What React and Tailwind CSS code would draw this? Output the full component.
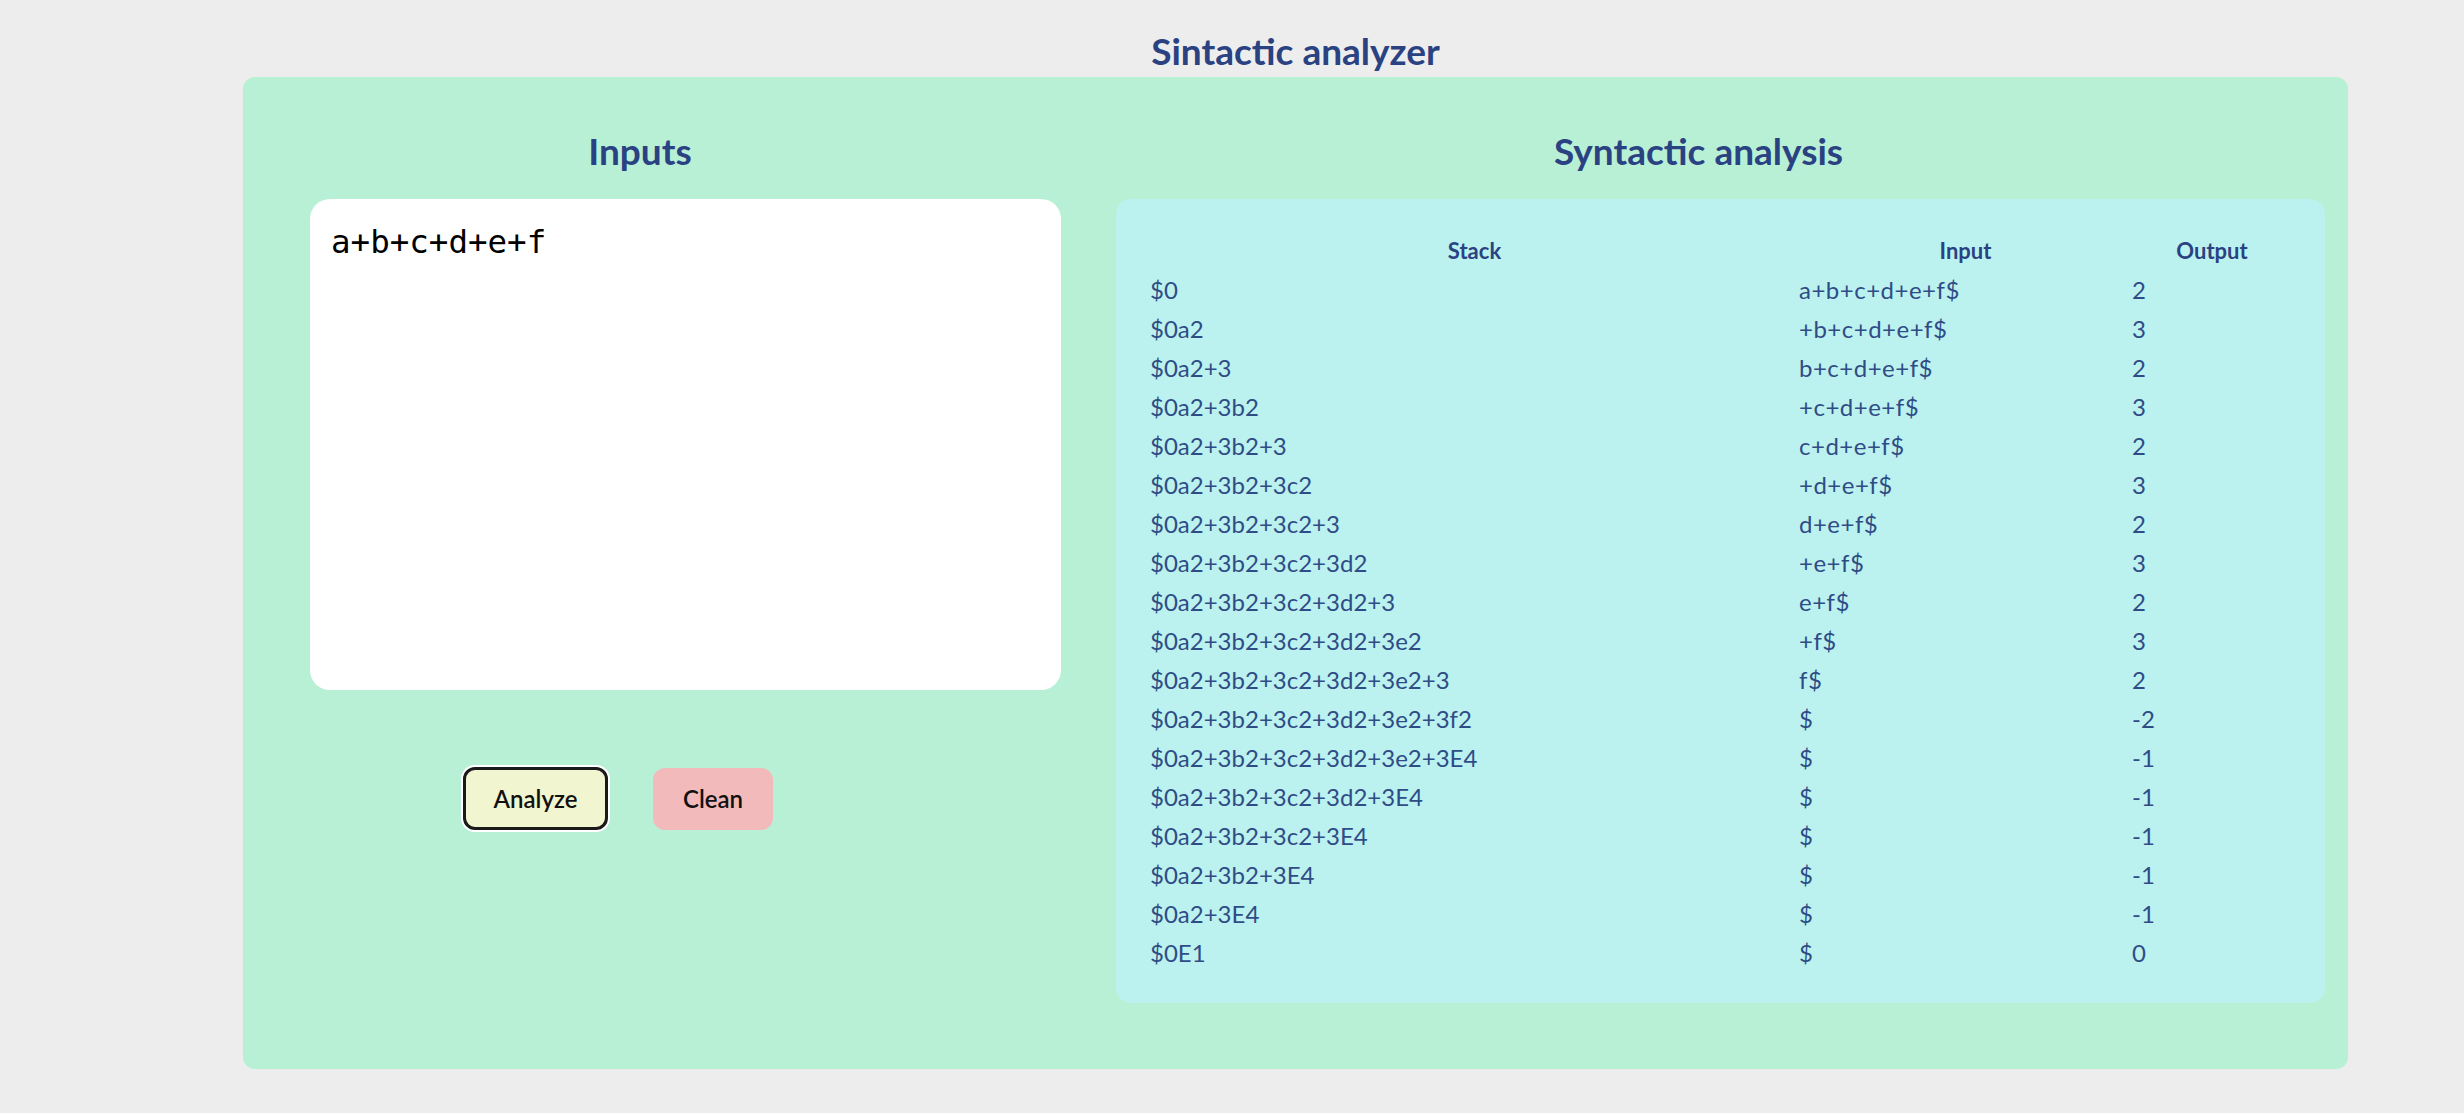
import { useState } from "react";

const rows = [
  ["$0", "a+b+c+d+e+f$", "2"],
  ["$0a2", "+b+c+d+e+f$", "3"],
  ["$0a2+3", "b+c+d+e+f$", "2"],
  ["$0a2+3b2", "+c+d+e+f$", "3"],
  ["$0a2+3b2+3", "c+d+e+f$", "2"],
  ["$0a2+3b2+3c2", "+d+e+f$", "3"],
  ["$0a2+3b2+3c2+3", "d+e+f$", "2"],
  ["$0a2+3b2+3c2+3d2", "+e+f$", "3"],
  ["$0a2+3b2+3c2+3d2+3", "e+f$", "2"],
  ["$0a2+3b2+3c2+3d2+3e2", "+f$", "3"],
  ["$0a2+3b2+3c2+3d2+3e2+3", "f$", "2"],
  ["$0a2+3b2+3c2+3d2+3e2+3f2", "$", "-2"],
  ["$0a2+3b2+3c2+3d2+3e2+3E4", "$", "-1"],
  ["$0a2+3b2+3c2+3d2+3E4", "$", "-1"],
  ["$0a2+3b2+3c2+3E4", "$", "-1"],
  ["$0a2+3b2+3E4", "$", "-1"],
  ["$0a2+3E4", "$", "-1"],
  ["$0E1", "$", "0"],
];

export default function App() {
  const [text, setText] = useState("a+b+c+d+e+f");

  return (
    <div className="min-h-screen bg-[#ededed] pt-[32px] font-['Lato','Noto_Sans',sans-serif]">
      <div className="ml-[243px] w-[2105px]">
        <h1 className="h-[37px] text-center text-[37px] leading-none font-bold text-[#2a4282]">
          Sintactic analyzer
        </h1>

        <div className="mt-[8px] flex h-[992px] rounded-[12px] bg-[#b8f0d6]">
          {/* inputs */}
          <div className="w-[818px] shrink-0 pt-[55px]">
            <h2 className="h-[37px] pr-[24px] text-center text-[37px] leading-none font-bold text-[#2a4282]">
              Inputs
            </h2>
            <textarea
              className="mt-[30px] ml-[67px] block h-[491px] w-[751px] resize-none rounded-[20px] bg-white pt-[24px] pl-[21px] font-['DejaVu_Sans_Mono',monospace] text-[32.5px] leading-[38px] text-black outline-none"
              value={text}
              onChange={e => setText(e.target.value)}
            />
            <div className="mt-[77px] flex items-center">
              <button className="ml-[220px] h-[63px] w-[145px] rounded-[12px] border-[3px] border-[#1a1a1a] bg-[#f2f6d0] text-[24px] font-semibold text-[#111] ring-2 ring-white">
                Analyze
              </button>
              <button className="ml-[45px] h-[62px] w-[120px] rounded-[12px] bg-[#f2baba] text-[24px] font-semibold text-[#111]">
                Clean
              </button>
            </div>
          </div>

          {/* analysis */}
          <div className="flex-1 pt-[55px]">
            <h2 className="h-[37px] pr-[12px] text-center text-[37px] leading-none font-bold text-[#2a4282]">
              Syntactic analysis
            </h2>
            <div className="mt-[30px] ml-[55px] w-[1209px] rounded-[15px] bg-[#bbf2ef] px-[34px] pt-[32px] pb-[31px]">
              <div className="grid grid-cols-[649px_333px_160px]">
                <div className="h-[39px] text-center text-[22px] leading-[39px] font-bold text-[#2a4282]">Stack</div>
                <div className="h-[39px] text-center text-[22px] leading-[39px] font-bold text-[#2a4282]">Input</div>
                <div className="h-[39px] text-center text-[22px] leading-[39px] font-bold text-[#2a4282]">Output</div>
                {rows.map((r, i) => (
                  <div key={i} className="contents text-[24px] leading-[39px] text-[#2f4c86]">
                    <div className="h-[39px]">{r[0]}</div>
                    <div className="h-[39px] tracking-[0.5px]">{r[1]}</div>
                    <div className="h-[39px]">{r[2]}</div>
                  </div>
                ))}
              </div>
            </div>
          </div>
        </div>
      </div>
    </div>
  );
}
